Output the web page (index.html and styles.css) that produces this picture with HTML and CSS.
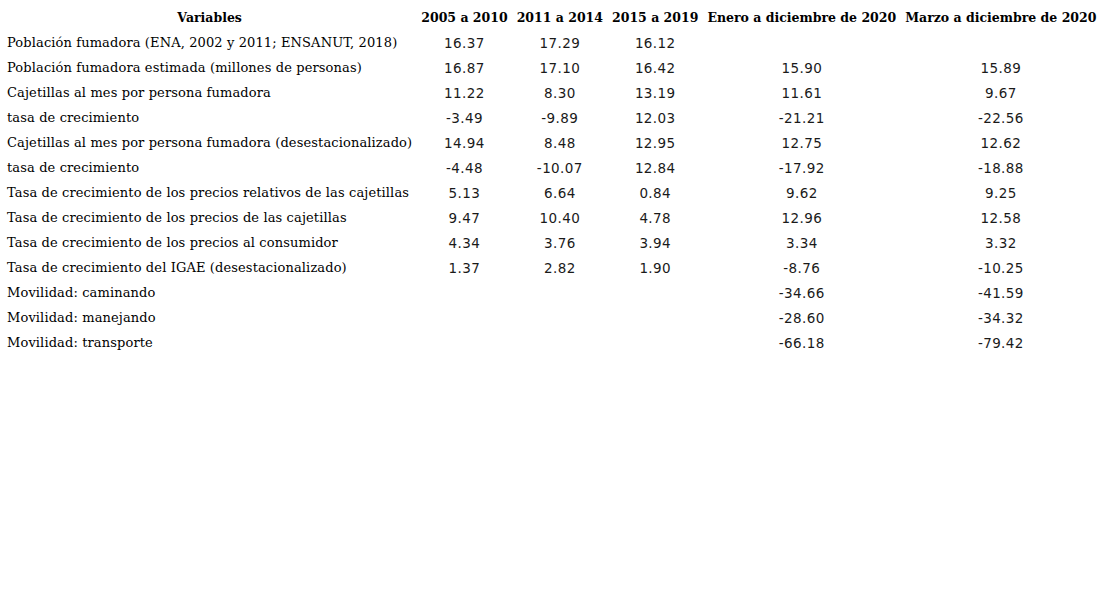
FILE: index.html
```html
<!DOCTYPE html>
<html lang="es">
<head>
<meta charset="utf-8">
<link rel="stylesheet" href="styles.css">
</head>
<body>
<table class="data">
<thead>
<tr><th>Variables</th><th>2005 a 2010</th><th>2011 a 2014</th><th>2015 a 2019</th><th>Enero a diciembre de 2020</th><th>Marzo a diciembre de 2020</th></tr>
</thead>
<tbody>
<tr><td class="label">Población fumadora (ENA, 2002 y 2011; ENSANUT, 2018)</td><td>16.37</td><td>17.29</td><td>16.12</td><td></td><td></td></tr>
<tr><td class="label">Población fumadora estimada (millones de personas)</td><td>16.87</td><td>17.10</td><td>16.42</td><td>15.90</td><td>15.89</td></tr>
<tr><td class="label">Cajetillas al mes por persona fumadora</td><td>11.22</td><td>8.30</td><td>13.19</td><td>11.61</td><td>9.67</td></tr>
<tr><td class="label">tasa de crecimiento</td><td>-3.49</td><td>-9.89</td><td>12.03</td><td>-21.21</td><td>-22.56</td></tr>
<tr><td class="label">Cajetillas al mes por persona fumadora (desestacionalizado)</td><td>14.94</td><td>8.48</td><td>12.95</td><td>12.75</td><td>12.62</td></tr>
<tr><td class="label">tasa de crecimiento</td><td>-4.48</td><td>-10.07</td><td>12.84</td><td>-17.92</td><td>-18.88</td></tr>
<tr><td class="label">Tasa de crecimiento de los precios relativos de las cajetillas</td><td>5.13</td><td>6.64</td><td>0.84</td><td>9.62</td><td>9.25</td></tr>
<tr><td class="label">Tasa de crecimiento de los precios de las cajetillas</td><td>9.47</td><td>10.40</td><td>4.78</td><td>12.96</td><td>12.58</td></tr>
<tr><td class="label">Tasa de crecimiento de los precios al consumidor</td><td>4.34</td><td>3.76</td><td>3.94</td><td>3.34</td><td>3.32</td></tr>
<tr><td class="label">Tasa de crecimiento del IGAE (desestacionalizado)</td><td>1.37</td><td>2.82</td><td>1.90</td><td>-8.76</td><td>-10.25</td></tr>
<tr><td class="label">Movilidad: caminando</td><td></td><td></td><td></td><td>-34.66</td><td>-41.59</td></tr>
<tr><td class="label">Movilidad: manejando</td><td></td><td></td><td></td><td>-28.60</td><td>-34.32</td></tr>
<tr><td class="label">Movilidad: transporte</td><td></td><td></td><td></td><td>-66.18</td><td>-79.42</td></tr>
</tbody>
</table>
</body>
</html>
```
FILE: styles.css
```css
body {
  margin: 4px 1.5px;
  background: #fff;
  color: #000;
  font-family: "DejaVu Serif", serif;
}
.data {
  border-collapse: separate;
  border-spacing: 2px;
  font-size: 13px;
}
.data th {
  font-weight: bold;
  font-size: 12.5px;
  text-align: center;
  padding: 1px 3.5px;
  height: 21px;
  white-space: nowrap;
}
.data td {
  text-align: center;
  padding: 1px 3.5px;
  height: 21px;
  white-space: nowrap;
  font-family: "DejaVu Sans", sans-serif;
  font-size: 13.5px;
  font-weight: normal;
  letter-spacing: 0.4px;
  color: #1a1a1a;
}
.data td.label {
  text-align: left;
  font-family: "DejaVu Serif", serif;
  font-size: 13px;
  color: #000;
  letter-spacing: 0.12px;
}
```
